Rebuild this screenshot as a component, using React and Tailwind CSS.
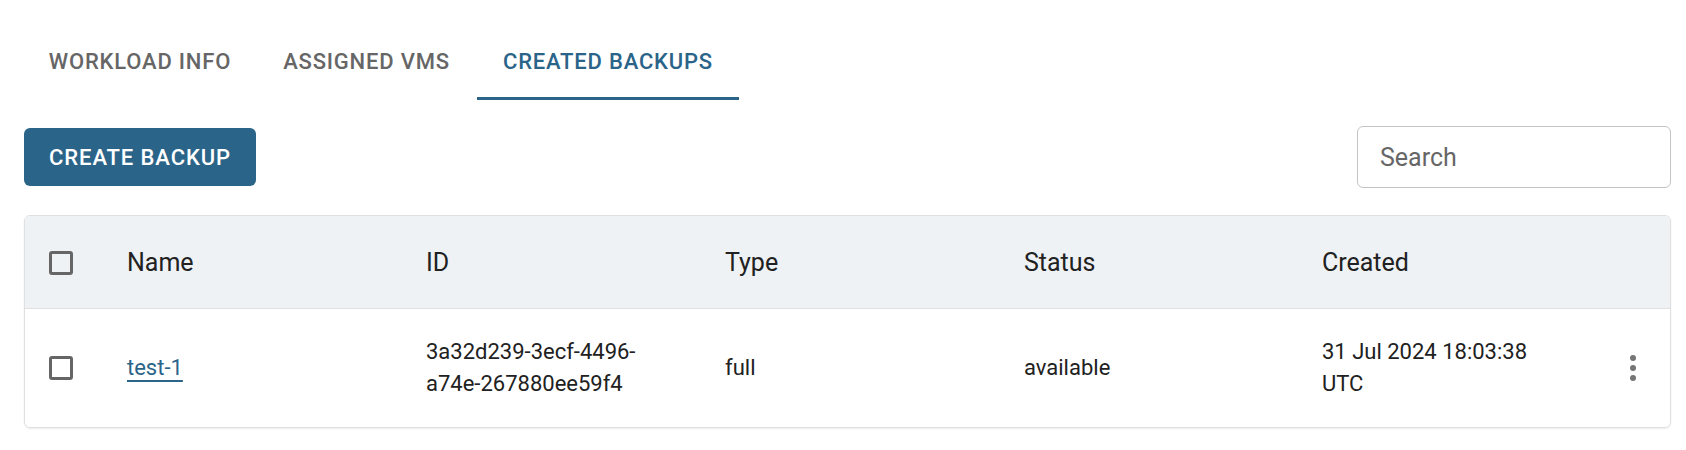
export default function App() {
  const primary = "text-[#2b6489]";
  return (
    <div className="min-h-[450px] bg-white pl-[24px] pr-[15px] font-['Roboto',_'Liberation_Sans',_sans-serif]">
      {/* Tabs */}
      <div className="flex pt-[23px]">
        <div className="flex h-[77px] w-[232px] items-center justify-center text-[22px] font-medium uppercase tracking-[0.8px] text-[#666666]">
          Workload Info
        </div>
        <div className="flex h-[77px] w-[221px] items-center justify-center text-[22px] font-medium uppercase tracking-[0.8px] text-[#666666]">
          Assigned VMs
        </div>
        <div className={`relative flex h-[77px] w-[262px] items-center justify-center text-[22px] font-medium uppercase tracking-[0.8px] ${primary}`}>
          Created Backups
          <div className="absolute bottom-0 left-0 right-0 h-[3px] bg-[#2b6489]" />
        </div>
      </div>

      {/* Toolbar */}
      <div className="mt-[26px] flex h-[62px] items-center justify-between">
        <button className="h-[58px] w-[232px] rounded-[6px] bg-[#2b6489] text-[22px] font-medium uppercase tracking-[0.9px] text-white">
          Create Backup
        </button>
        <div className="flex h-[62px] w-[314px] items-center rounded-[6px] border border-[#c4c4c4] pl-[22px] pt-[2px] text-[25px] text-[#666666]">
          Search
        </div>
      </div>

      {/* Table */}
      <div className="mt-[27px] overflow-hidden rounded-[6px] border border-[#e0e0e0] shadow-[0_1px_2px_rgba(0,0,0,0.08)]">
        <div className="flex h-[93px] items-center border-b border-[#e0e0e0] bg-[#eef2f5] pt-[2px] text-[25px] text-[#212121]">
          <div className="flex w-[102px] items-center pl-[24px]">
            <div className="h-[24px] w-[24px] rounded-[3px] border-[3px] border-[#666666]" />
          </div>
          <div className="w-[299px]">Name</div>
          <div className="w-[299px]">ID</div>
          <div className="w-[299px]">Type</div>
          <div className="w-[298px]">Status</div>
          <div className="flex-1">Created</div>
        </div>
        <div className="flex h-[118px] items-center text-[22px] leading-[32px] text-[#212121]">
          <div className="flex w-[102px] items-center pl-[24px]">
            <div className="h-[24px] w-[24px] rounded-[3px] border-[3px] border-[#666666]" />
          </div>
          <div className="w-[299px]">
            <span className={`underline decoration-[2px] underline-offset-[5px] ${primary}`}>test-1</span>
          </div>
          <div className="w-[299px]">
            <div>3a32d239-3ecf-4496-</div>
            <div>a74e-267880ee59f4</div>
          </div>
          <div className="w-[299px]">full</div>
          <div className="w-[298px]">available</div>
          <div className="w-[280px]">
            <div>31 Jul 2024 18:03:38</div>
            <div>UTC</div>
          </div>
          <div className="flex flex-1 items-center justify-start pl-[25px]">
            <svg width="12" height="30" viewBox="0 0 12 30">
              <circle cx="6" cy="5" r="3" fill="#757575" />
              <circle cx="6" cy="15" r="3" fill="#757575" />
              <circle cx="6" cy="25" r="3" fill="#757575" />
            </svg>
          </div>
        </div>
      </div>
    </div>
  );
}
